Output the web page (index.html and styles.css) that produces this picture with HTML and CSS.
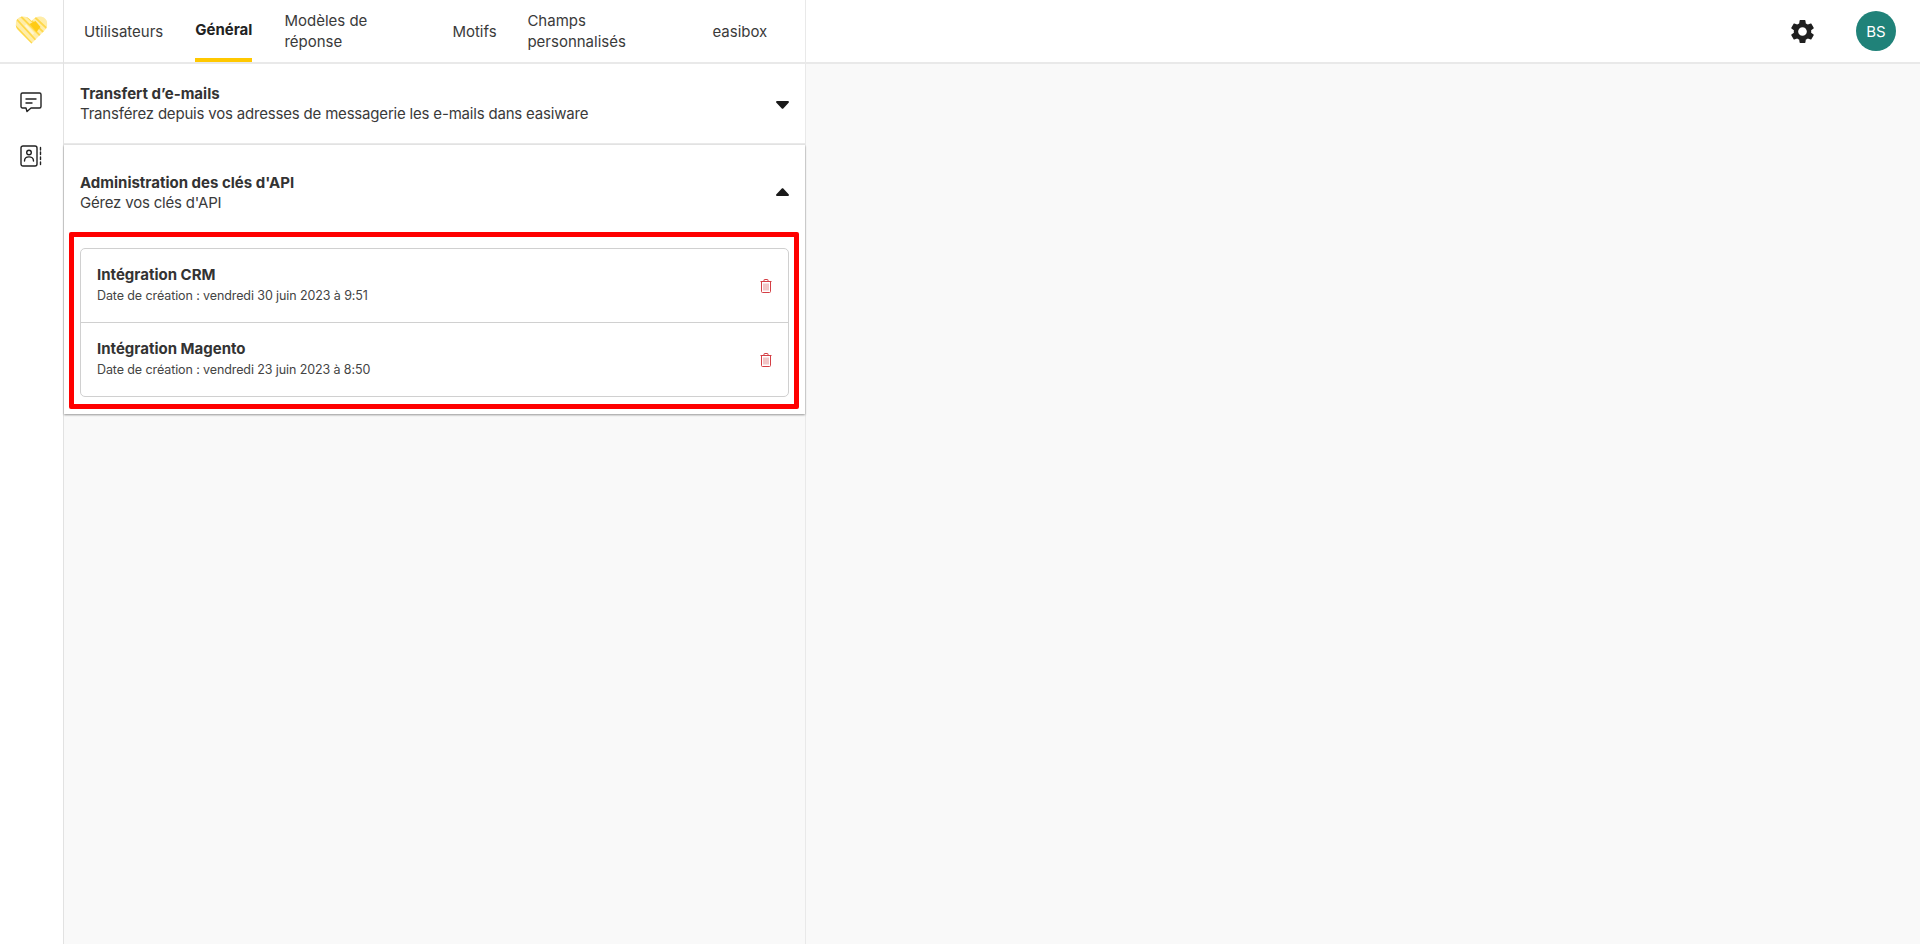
FILE: index.html
```html
<!DOCTYPE html>
<html lang="fr">
<head>
<meta charset="utf-8">
<title>easiware</title>
<link rel="stylesheet" href="styles.css">
</head>
<body>
<div class="app">
  <aside class="rail">
    <div class="rail-logo">
      <svg class="logo" width="33" height="28" viewBox="0 0 32 28">
        <defs><clipPath id="heart"><path d="M16 27.500 2.500 14C-1 10-.5 4.500 3 2c3.500-2.500 9-2 13 3 4-5 9.500-5.500 13-3s4 8 .5 12z"/></clipPath></defs>
        <g clip-path="url(#heart)">
          <rect width="32" height="28" fill="#ffeda8"/>
          <path d="M-2 8 17 28M0 2 22 26M5 0 27 22M11 0 32 20M18 0 34 15" stroke="#ffd84a" stroke-width="1.800" fill="none"/>
          <path d="M14 8 21 16 25 11 20 5z" fill="#ffcb14"/>
          <path d="M10 9 18 18" stroke="#fff6d2" stroke-width="2.200"/>
        </g>
      </svg>
    </div>
    <div class="rail-icons">
      <svg width="22" height="22" viewBox="0 0 22 22" fill="none" stroke="#222" stroke-width="1.400" stroke-linecap="round" stroke-linejoin="round">
        <path d="M2.500 1h17a1.500 1.500 0 0 1 1.500 1.500v12a1.500 1.500 0 0 1-1.500 1.500H11l-4 3.500-1-3.500H2.500A1.500 1.500 0 0 1 1 14.500v-12A1.500 1.500 0 0 1 2.500 1z"/>
        <path d="M6 7h10M6 11h6"/>
      </svg>
      <svg width="22" height="22" viewBox="0 0 22 22" fill="none" stroke="#222" stroke-width="1.400" stroke-linecap="round" stroke-linejoin="round">
        <rect x="1" y="1" width="16" height="20" rx="2"/>
        <circle cx="9" cy="7.500" r="2.300"/>
        <path d="M4.500 16c0-5.500 9-5.500 9 0M20.500 2.500v2.500M20.500 7v2.500M20.500 12v2.500M20.500 17v2.500"/>
      </svg>
    </div>
  </aside>
  <div class="main">
    <header class="topbar">
      <nav class="tabs">
        <a class="tab">Utilisateurs</a>
        <a class="tab tab-active">Général</a>
        <a class="tab tab-models">Modèles de réponse</a>
        <a class="tab tab-reasons">Motifs</a>
        <a class="tab tab-fields">Champs personnalisés</a>
        <a class="tab">easibox</a>
      </nav>
      <div class="top-actions">
        <svg class="gear" width="29" height="29" viewBox="0 0 24 24" fill="#1f1f1f"><path d="M19.140 12.940c.04-.3.06-.61.06-.94 0-.32-.02-.64-.07-.94l2.030-1.580c.18-.14.23-.41.12-.61l-1.920-3.320c-.12-.22-.37-.29-.59-.22l-2.390.96c-.5-.38-1.030-.7-1.620-.94l-.36-2.540c-.04-.24-.24-.41-.48-.41h-3.840c-.24 0-.43.17-.47.41l-.36 2.540c-.59.24-1.130.57-1.620.94l-2.390-.96c-.22-.08-.47 0-.59.22L2.740 8.870c-.12.21-.08.47.12.61l2.030 1.580c-.05.3-.09.63-.09.94s.02.64.07.94l-2.030 1.580c-.18.14-.23.41-.12.61l1.920 3.320c.12.22.37.29.59.22l2.390-.96c.5.38 1.030.7 1.620.94l.36 2.540c.05.24.24.41.48.41h3.840c.24 0 .44-.17.47-.41l.36-2.540c.59-.24 1.130-.56 1.620-.94l2.390.96c.22.08.47 0 .59-.22l1.920-3.320c.12-.22.07-.47-.12-.61l-2.010-1.580zM12 15.600c-1.980 0-3.600-1.620-3.600-3.600s1.620-3.600 3.600-3.600 3.600 1.620 3.600 3.600-1.620 3.600-3.600 3.600z"/></svg>
        <div class="avatar">BS</div>
      </div>
    </header>
    <div class="content">
      <section class="panel">
        <div class="acc acc-closed">
          <div class="acc-text">
            <div class="acc-title">Transfert d’e-mails</div>
            <div class="acc-sub">Transférez depuis vos adresses de messagerie les e-mails dans easiware</div>
          </div>
          <svg class="caret" width="13" height="8" viewBox="0 0 13 8" fill="#1a1a1a"><path d="M1.200 0h10.600c1 0 1.500 1.100.8 1.800L7.300 7.500c-.4.400-1.100.4-1.500 0L.4 1.800C-.3 1.100.2 0 1.200 0z"/></svg>
        </div>
        <div class="acc acc-open">
          <div class="acc-head">
            <div class="acc-text">
              <div class="acc-title">Administration des clés d'API</div>
              <div class="acc-sub">Gérez vos clés d'API</div>
            </div>
            <svg class="caret" width="13" height="8" viewBox="0 0 13 8" fill="#1a1a1a"><path d="M1.200 8h10.600c1 0 1.500-1.100.8-1.800L7.300.5c-.4-.4-1.100-.4-1.500 0L.4 6.200C-.3 6.900.2 8 1.200 8z"/></svg>
          </div>
          <div class="highlight">
            <ul class="keys">
              <li class="key">
                <div>
                  <div class="key-name">Intégration CRM</div>
                  <div class="key-date">Date de création : vendredi 30 juin 2023 à 9:51</div>
                </div>
                <svg class="trash" width="12" height="14" viewBox="0 0 12 14" fill="none" stroke="#d43f45" stroke-width="1"><path d="M.5 2.500h11M1.500 2.500v10a1 1 0 0 0 1 1h7a1 1 0 0 0 1-1v-10M4 2.500V1a.5.5 0 0 1 .5-.5h3A.5.5 0 0 1 8 1v1.500"/><path d="M4 4.500v7M6 4.500v7M8 4.500v7" stroke-opacity=".6"/></svg>
              </li>
              <li class="key">
                <div>
                  <div class="key-name">Intégration Magento</div>
                  <div class="key-date">Date de création : vendredi 23 juin 2023 à 8:50</div>
                </div>
                <svg class="trash" width="12" height="14" viewBox="0 0 12 14" fill="none" stroke="#d43f45" stroke-width="1"><path d="M.5 2.500h11M1.500 2.500v10a1 1 0 0 0 1 1h7a1 1 0 0 0 1-1v-10M4 2.500V1a.5.5 0 0 1 .5-.5h3A.5.5 0 0 1 8 1v1.500"/><path d="M4 4.500v7M6 4.500v7M8 4.500v7" stroke-opacity=".6"/></svg>
              </li>
            </ul>
          </div>
        </div>
      </section>
    </div>
  </div>
</div>
</body>
</html>
```
FILE: styles.css
```css
* { box-sizing: border-box; }
html, body { margin: 0; height: 100%; }
body {
  font-family: "Inter", "Liberation Sans", sans-serif;
  color: #333;
  background: #fff;
  overflow: hidden;
}
.app { display: flex; height: 944px; }
.rail {
  width: 64px;
  flex: none;
  border-right: 1px solid #e2e2e2;
  display: flex;
  flex-direction: column;
}
.rail-logo {
  height: 64px;
  border-bottom: 2px solid #e9e9e9;
  display: flex;
  align-items: center;
  justify-content: center;
  padding-right: 1px;
  padding-bottom: 2px;
}
.rail-icons {
  display: flex;
  flex-direction: column;
  align-items: center;
  gap: 31px;
  padding-top: 28px;
  padding-right: 1px;
}
.main { flex: 1; display: flex; flex-direction: column; min-width: 0; }
.topbar {
  height: 64px;
  flex: none;
  display: flex;
  justify-content: space-between;
  border-bottom: 2px solid #e9e9e9;
}
.tabs {
  width: 742px;
  border-right: 1px solid #e9e9e9;
  display: flex;
  gap: 32px;
  padding-left: 20px;
}
.tab {
  display: flex;
  align-items: center;
  font-size: 15px;
  line-height: 21px;
  color: #3a3a3a;
  height: 62px;
  white-space: nowrap;
}
.tab-active {
  font-weight: 700;
  color: #222;
  border-bottom: 4px solid #ffc800;
}
.tab-models { width: 136px; white-space: normal; }
.tab-reasons { width: 43px; }
.tab-fields { width: 153px; white-space: normal; }
.top-actions {
  display: flex;
  align-items: center;
  gap: 39px;
  padding-right: 24px;
}
.gear { display: block; }
.avatar {
  width: 40px;
  height: 40px;
  border-radius: 50%;
  background: #208279;
  color: #fff;
  font-size: 15px;
  display: flex;
  align-items: center;
  justify-content: center;
}
.content { flex: 1; background: #f9f9f9; min-height: 0; }
.panel {
  width: 742px;
  height: 100%;
  border-right: 1px solid #e9e9e9;
}
.acc { background: #fff; }
.acc-closed {
  height: 81px;
  padding: 20px 16px 0;
  display: flex;
  justify-content: space-between;
  border-bottom: 2px solid #e9e9e9;
}
.acc-closed .caret { margin-top: 17px; }
.acc-open {
  height: 269px;
  box-shadow: 0 1px 2px rgba(0,0,0,.4);
  padding-top: 28px;
}
.acc-head {
  display: flex;
  justify-content: space-between;
  padding: 0 16px;
}
.acc-head .caret { margin-top: 15px; }
.acc-title { font-size: 15px; line-height: 20px; font-weight: 700; color: #333; }
.acc-sub { font-size: 15px; line-height: 20px; color: #3a3a3a; letter-spacing: -.19px; }
.highlight {
  margin: 19px 6px 0 5px;
  border: 5px solid #ff0000;
  border-radius: 2px;
  padding: 11px 5px 7px 6px;
}
.keys {
  list-style: none;
  margin: 0;
  padding: 0;
  border: 1px solid #d0d0d0;
  border-radius: 5px;
}
.key {
  height: 73px;
  padding: 0 16px;
  display: flex;
  align-items: center;
  justify-content: space-between;
}
.key + .key { height: 74px; border-top: 1px solid #d0d0d0; }
.key-name { font-size: 15px; line-height: 20px; font-weight: 700; color: #333; }
.key-date { font-size: 12.500px; line-height: 20px; color: #444; margin-top: 1px; letter-spacing: -.1px; }
.trash { display: block; }
```
